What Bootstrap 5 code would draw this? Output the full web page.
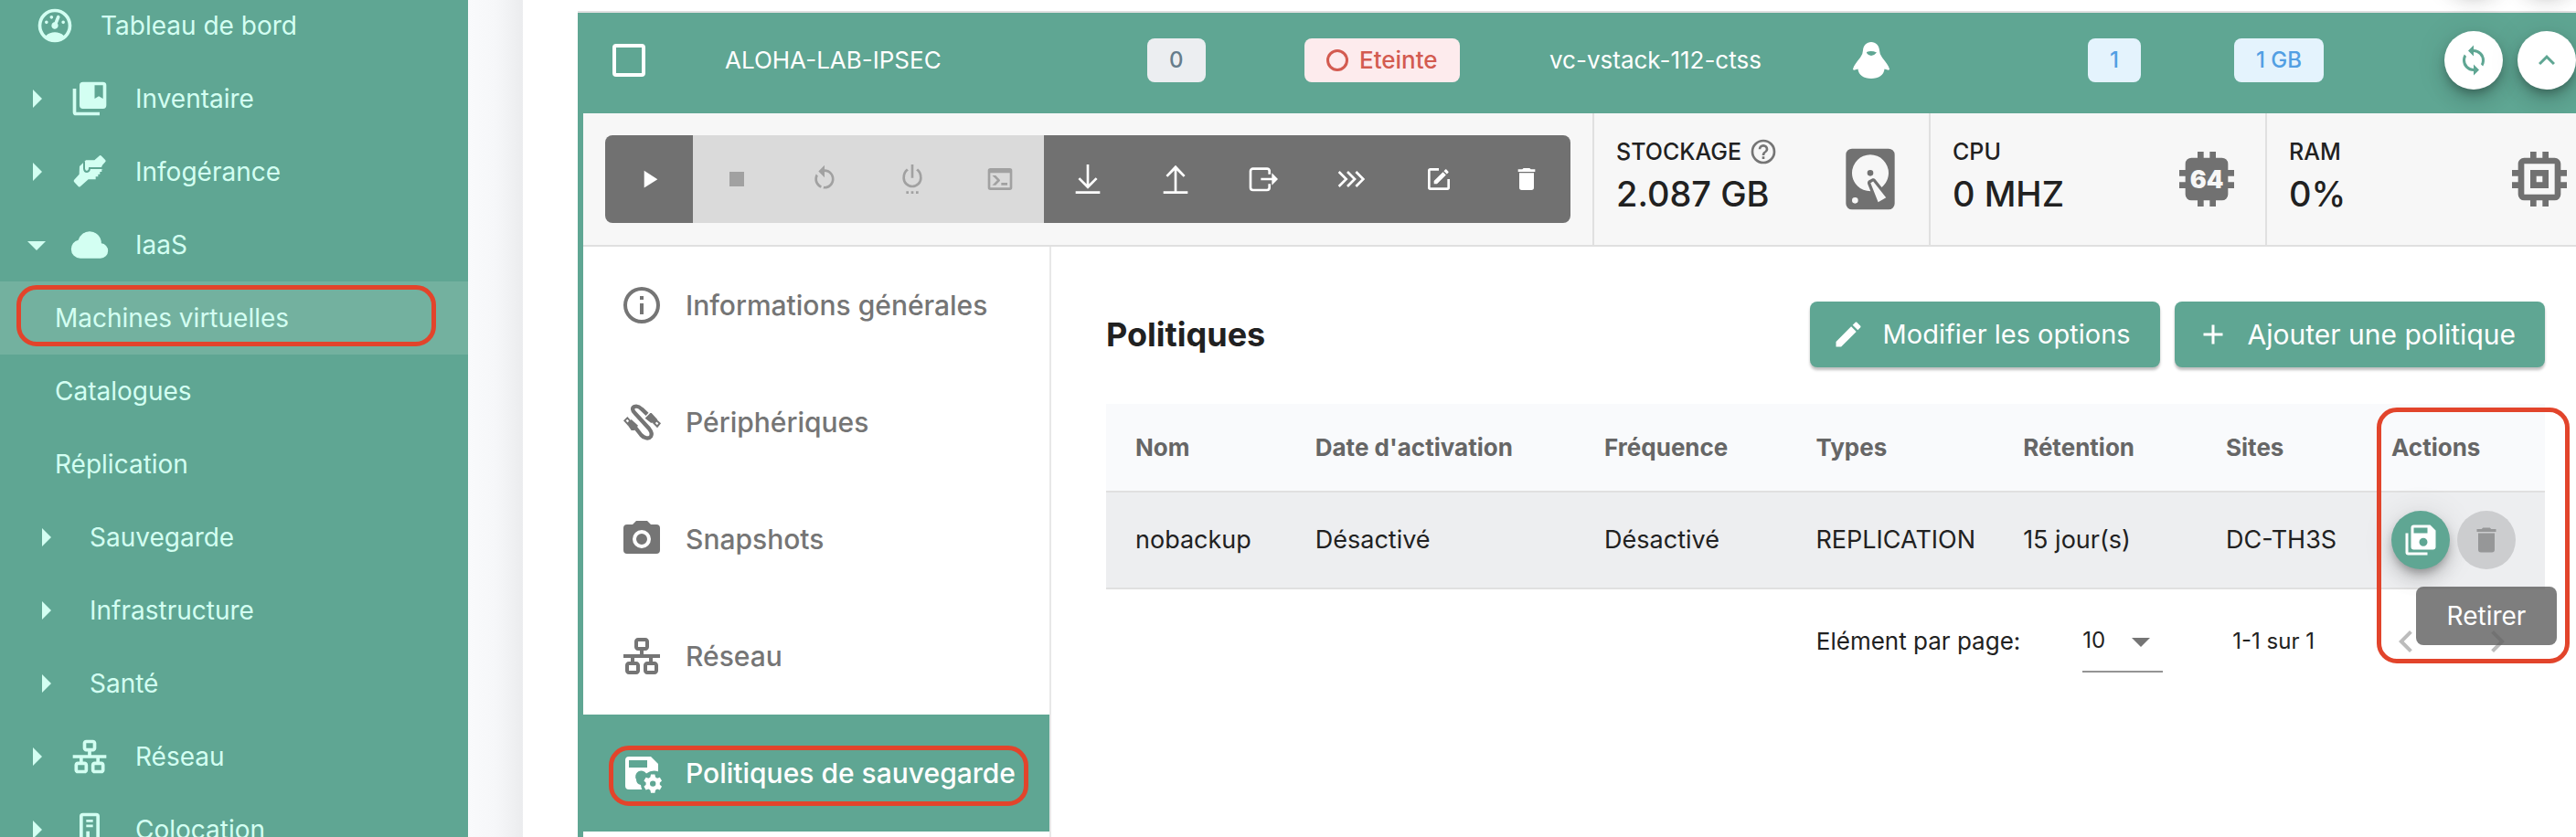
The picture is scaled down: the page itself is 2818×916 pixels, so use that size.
<!DOCTYPE html>
<html lang="fr">
<head>
<meta charset="utf-8">
<meta name="viewport" content="width=device-width, initial-scale=1">
<title>Machines virtuelles</title>
<link href="https://cdn.jsdelivr.net/npm/bootstrap@5.3.0/dist/css/bootstrap.min.css" rel="stylesheet">
<style>
:root{--brand:#5fa693;--mint:#d3fff2;--grey:#717171;--line:#e0e0e0;--alert:#e2442b;}
body{font-family:Inter,"Open Sans",sans-serif;font-size:26px;line-height:40px;color:#212121;background:#fff;}
svg{display:block;fill:currentColor;flex-shrink:0;}
.i32{width:32px;height:32px}.i36{width:36px;height:36px}.i44{width:44px;height:44px}.i48{width:48px;height:48px}.i80{width:80px;height:80px}
.shell{height:100vh;}
.side{width:512px;background:var(--brand);font-size:28px;}
.side ul{margin-top:-12px;}
.side a{height:80px;color:var(--mint);padding-left:16px;gap:12px;white-space:nowrap;}
.side a.top-link{padding-left:38px;gap:28px;}
.side .lbl{margin-left:16px;}
.side a.leaf{padding-left:60px;}
.side a.nested{padding-left:26px;}
.side .nested .lbl{margin-left:12px;}
.side a.current{background:#73b19f;}
.ring::after{content:"";position:absolute;border:5px solid var(--alert);border-radius:22px;pointer-events:none;}
.side .ring::after{left:18px;right:35px;top:4px;bottom:9px;}
.gutter{width:60px;background:linear-gradient(90deg,#f9fafc 0,#f6f7f9 50%,#ebecee 100%);}
.page-main{padding-left:60px;}
.prev-row{height:112px;margin-top:-98px;border-bottom:2px solid var(--line);}
.vm{border-left:6px solid var(--brand);min-height:100vh;}
.vm-head{background:var(--brand);color:#fff;height:110px;padding-bottom:6px;display:grid;grid-template-columns:155px 462fr 172fr 268fr 332fr 257fr 160fr 230fr 144px;align-items:center;}
.vm-check{appearance:none;width:36px;height:36px;border:4px solid #fff;border-radius:4px;background:none;margin-left:32px;display:block;}
.os-icon{margin-left:-4px;}
.chip{height:48px;padding:0 24px;border-radius:8px;font-size:24px;font-weight:500;display:inline-flex;align-items:center;gap:12px;vertical-align:middle;}
.chip-n{background:#eceef1;color:#667c8b;}
.chip-r{background:#fdebed;color:#d35b50;font-size:26px;}
.chip-b{background:#e4f3fd;color:#529fe3;}
.dot{width:24px;height:24px;border:3px solid;border-radius:50%;}
.fab{width:64px;height:64px;border:0;border-radius:50%;padding:0;display:flex;align-items:center;justify-content:center;background:#fff;color:var(--brand);box-shadow:0 6px 10px -2px rgba(0,0,0,.25),0 12px 20px rgba(0,0,0,.14),0 2px 36px rgba(0,0,0,.1);}
.fab-go{background:var(--brand);color:#fff;}
.fab-off{background:#cccdcf;color:#969798;box-shadow:none;}
.tools{background:#f7f7f7;border-bottom:2px solid var(--line);height:146px;}
.tool-group{margin:24px;border-radius:8px;overflow:hidden;}
.tool-group .btn{width:96px;height:96px;padding:0;border:0;border-radius:0;background:var(--grey);color:#fff;display:flex;align-items:center;justify-content:center;opacity:1;}
.tool-group .btn:disabled{background:#dadada;color:#a1a1a1;}
.stat{border-left:2px solid var(--line);padding:0 24px 0 24px;height:144px;flex:0 0 368px;color:var(--grey);}
.stat:last-child{flex:1 1 0;padding-right:0;}
.stat-name{color:#212121;font-weight:500;font-size:25px;line-height:36px;}
.stat-name svg{color:#757575;}
.stat-val{color:#212121;font-weight:500;font-size:38px;line-height:56px;padding-bottom:4px;}
.vm-nav{width:512px;border-right:2px solid #e8e8e8;}
.vm-nav a{height:128px;padding-left:40px;gap:24px;color:#757575;font-size:30px;font-weight:500;white-space:nowrap;}
.vm-nav a.on{background:var(--brand);color:#fff;}
.vm-nav .ring::after{left:28px;right:23px;top:34px;bottom:28px;}
.pane{padding:60px 34px 0 60px;}
.pane h2{font-size:36px;font-weight:700;line-height:72px;margin:0;}
.act{height:72px;border:0;border-radius:8px;background:var(--brand);color:#fff;font-size:29px;padding:0 32px 0 24px;gap:20px;box-shadow:0 3px 3px rgba(0,0,0,.25);}
.act-add{font-size:30px;}
.act:hover{background:var(--brand);color:#fff;}
.pol-wrap{padding-top:40px;}
.pol{table-layout:fixed;margin:0;}
.pol th,.pol td{padding:0 0 0 32px;vertical-align:middle;border-bottom:2px solid var(--line);white-space:nowrap;background:none;color:#212121;}
.pol th{height:96px;background:#f9fafc;color:#666;font-size:26px;font-weight:700;}
.pol td{height:106px;background:#edeef0;font-size:27px;}
.c1{width:12.5%}.c2{width:20.1%}.c3{width:14.7%}.c4{width:14.4%}.c5{width:14.1%}.c6{width:11.5%}.c7{width:12.7%}
.pol-wrap::after{right:-27px;width:211px;top:44px;height:280px;z-index:3;}
.tip{right:-13px;top:240px;width:154px;height:64px;border-radius:8px;background:rgba(97,97,97,.82);color:#fff;z-index:2;font-size:28px;}
.pager{height:114px;font-size:24px;padding-right:28px;}
.pager label{font-size:26px;margin-right:68px;}
.pager .size-box,.pager .range{margin-right:76px;}
.pager select{appearance:none;border:0;border-bottom:2px solid #949494;border-radius:0;background:none;width:88px;height:68px;padding:0;font-size:24px;color:#212121;display:block;}
.pager .caret{right:0;top:10px;color:#757575;pointer-events:none;}
.pager button{border:0;background:none;padding:0;color:#bcbcbc;}
.pager .prev{margin-right:52px;}
</style>
</head>
<body>
<div class="shell d-flex overflow-hidden">
  <nav class="side flex-shrink-0 overflow-hidden" aria-label="Menu principal">
    <ul class="list-unstyled mb-0">
      <li><a href="#" class="top-link d-flex align-items-center text-decoration-none"><svg class="i44" viewBox="0 0 24 24"><path d="M12,2A10,10 0 0,0 2,12A10,10 0 0,0 12,22A10,10 0 0,0 22,12A10,10 0 0,0 12,2M12,4A8,8 0 0,1 20,12C20,14.4 19,16.5 17.3,18C15.9,16.7 14,16 12,16C10,16 8.2,16.7 6.7,18C5,16.5 4,14.4 4,12A8,8 0 0,1 12,4M14,5.89C13.62,5.9 13.26,6.15 13.1,6.54L11.81,9.77L11.71,10C11,10.13 10.41,10.6 10.14,11.26C9.73,12.29 10.23,13.45 11.26,13.86C12.29,14.27 13.45,13.77 13.86,12.74C14.12,12.08 14,11.32 13.57,10.76L13.67,10.5L14.96,7.29L14.97,7.26C15.17,6.75 14.92,6.17 14.41,5.96C14.28,5.91 14.15,5.89 14,5.89M10,6A1,1 0 0,0 9,7A1,1 0 0,0 10,8A1,1 0 0,0 11,7A1,1 0 0,0 10,6M7,9A1,1 0 0,0 6,10A1,1 0 0,0 7,11A1,1 0 0,0 8,10A1,1 0 0,0 7,9M17,9A1,1 0 0,0 16,10A1,1 0 0,0 17,11A1,1 0 0,0 18,10A1,1 0 0,0 17,9Z"/></svg>Tableau de bord</a></li>
      <li><a href="#" class="d-flex align-items-center text-decoration-none"><svg class="i48" viewBox="0 0 24 24"><path d="M10,17L15,12L10,7V17Z"/></svg><svg class="i44" viewBox="0 0 24 24"><path d="M4,6H2V20A2,2 0 0,0 4,22H18V20H4V6M20,2H8A2,2 0 0,0 6,4V16A2,2 0 0,0 8,18H20A2,2 0 0,0 22,16V4A2,2 0 0,0 20,2M20,12L17.5,10.5L15,12V4H20V12Z"/></svg><span class="lbl">Inventaire</span></a></li>
      <li><a href="#" class="d-flex align-items-center text-decoration-none"><svg class="i48" viewBox="0 0 24 24"><path d="M10,17L15,12L10,7V17Z"/></svg><svg class="i44" viewBox="18 18 132 132"><path d="M51 66L72 46H100L117 31Q120 29 123 32L136 46Q138 49 136 51L126 62L123 69H128V76H124V84H118V92H112V100H104V109H80L53 133Q50 135 47 132L33 117Q31 114 33 111L50 92Z"/><path d="M66 50V74Q67 84 75 84Q84 83 84 72H130" fill="none" stroke="#5fa693" stroke-width="6"/></svg><span class="lbl">Infogérance</span></a></li>
      <li><a href="#" class="d-flex align-items-center text-decoration-none"><svg class="i48" viewBox="0 0 24 24"><path d="M7,10L12,15L17,10H7Z"/></svg><svg class="i44" viewBox="0 0 24 24"><path d="M6.5 20Q4.22 20 2.61 18.43 1 16.85 1 14.58 1 12.63 2.17 11.1 3.35 9.57 5.25 9.15 5.88 6.85 7.75 5.43 9.63 4 12 4 14.93 4 16.96 6.04 19 8.07 19 11 20.73 11.2 21.86 12.5 23 13.78 23 15.5 23 17.38 21.69 18.69 20.38 20 18.5 20Z"/></svg><span class="lbl">IaaS</span></a></li>
      <li><a href="#" class="leaf current ring position-relative d-flex align-items-center text-decoration-none" aria-current="page">Machines virtuelles</a></li>
      <li><a href="#" class="leaf d-flex align-items-center text-decoration-none">Catalogues</a></li>
      <li><a href="#" class="leaf d-flex align-items-center text-decoration-none">Réplication</a></li>
      <li><a href="#" class="nested d-flex align-items-center text-decoration-none"><svg class="i48" viewBox="0 0 24 24"><path d="M10,17L15,12L10,7V17Z"/></svg><span class="lbl">Sauvegarde</span></a></li>
      <li><a href="#" class="nested d-flex align-items-center text-decoration-none"><svg class="i48" viewBox="0 0 24 24"><path d="M10,17L15,12L10,7V17Z"/></svg><span class="lbl">Infrastructure</span></a></li>
      <li><a href="#" class="nested d-flex align-items-center text-decoration-none"><svg class="i48" viewBox="0 0 24 24"><path d="M10,17L15,12L10,7V17Z"/></svg><span class="lbl">Santé</span></a></li>
      <li><a href="#" class="d-flex align-items-center text-decoration-none"><svg class="i48" viewBox="0 0 24 24"><path d="M10,17L15,12L10,7V17Z"/></svg><svg class="i44" viewBox="0 0 24 24"><path d="M10,2C8.89,2 8,2.89 8,4V7C8,8.11 8.89,9 10,9H11V11H2V13H6V15H5C3.89,15 3,15.89 3,17V20C3,21.11 3.89,22 5,22H9C10.11,22 11,21.11 11,20V17C11,15.89 10.11,15 9,15H8V13H16V15H15C13.89,15 13,15.89 13,17V20C13,21.11 13.89,22 15,22H19C20.11,22 21,21.11 21,20V17C21,15.89 20.11,15 19,15H18V13H22V11H13V9H14C15.11,9 16,8.11 16,7V4C16,2.89 15.11,2 14,2H10M10,4H14V7H10V4M5,17H9V20H5V17M15,17H19V20H15V17Z"/></svg><span class="lbl">Réseau</span></a></li>
      <li><a href="#" class="d-flex align-items-center text-decoration-none"><svg class="i48" viewBox="0 0 24 24"><path d="M10,17L15,12L10,7V17Z"/></svg><svg class="i44" viewBox="0 0 24 24"><path d="M8,2H16A2,2 0 0 1 18,4V22H6V4A2,2 0 0 1 8,2M8,4V20H16V4H8M10,6H14V7.5H10V6M10,9H14V10.5H10V9M10,13H12V20H10V13Z"/></svg><span class="lbl">Colocation</span></a></li>
    </ul>
  </nav>
  <div class="gutter flex-shrink-0"></div>
  <main class="page-main flex-grow-1 overflow-hidden">
    <div class="prev-row d-flex justify-content-end align-items-center gap-3">
      <button class="fab" type="button" aria-label="Actualiser"></button>
      <button class="fab" type="button" aria-label="Déplier"></button>
    </div>
    <section class="vm d-flex flex-column">
      <header class="vm-head text-nowrap">
        <div><input class="vm-check" type="checkbox" aria-label="Sélectionner ALOHA-LAB-IPSEC"></div>
        <div>ALOHA-LAB-IPSEC</div>
        <div><span class="chip chip-n">0</span></div>
        <div><span class="chip chip-r"><span class="dot"></span>Eteinte</span></div>
        <div>vc-vstack-112-ctss</div>
        <div><svg class="os-icon i48" viewBox="0 0 48 48"><path fill-rule="evenodd" d="M24 4C19 4 15.500 7.500 15 13Q15 17 12 21C8 26 5.500 29 4 33.500Q4 35 6 34.500L9.500 33.500C10 40 16 44 24 44S38 40 38.500 33.500L42 34.500Q44 35 44 33.500C42.500 29 40 26 36 21Q33 17 33 13C32.500 7.500 29 4 24 4M19 15Q24 13 30 15.500Q27 19 24 19Q21 19 19 16Z"/></svg></div>
        <div><span class="chip chip-b">1</span></div>
        <div><span class="chip chip-b">1 GB</span></div>
        <div class="d-flex gap-3">
          <button class="fab" type="button" aria-label="Actualiser"><svg class="i36" viewBox="0 0 24 24"><path d="M12,18A6,6 0 0,1 6,12C6,11 6.25,10.03 6.7,9.2L5.24,7.74C4.46,8.97 4,10.43 4,12A8,8 0 0,0 12,20V23L16,19L12,15M12,4V1L8,5L12,9V6A6,6 0 0,1 18,12C18,13 17.75,13.97 17.3,14.8L18.76,16.26C19.54,15.03 20,13.57 20,12A8,8 0 0,0 12,4Z"/></svg></button>
          <button class="fab" type="button" aria-label="Replier"><svg class="i36" viewBox="0 0 24 24"><path d="M7.41,15.41L12,10.83L16.59,15.41L18,14L12,8L6,14L7.41,15.41Z"/></svg></button>
        </div>
      </header>
      <div class="tools d-flex">
        <div class="tool-group d-flex flex-shrink-0 align-self-start">
          <button class="btn" type="button" aria-label="Démarrer"><svg class="i32" viewBox="0 0 24 24"><path d="M8,5.14V19.14L19,12.14L8,5.14Z"/></svg></button>
          <button class="btn" type="button" aria-label="Arrêter" disabled><svg class="i32" viewBox="0 0 24 24"><path d="M18,18H6V6H18V18Z"/></svg></button>
          <button class="btn" type="button" aria-label="Redémarrer" disabled><svg class="i32" viewBox="0 0 24 24"><path d="M12,4C14.1,4 16.1,4.8 17.6,6.3C20.7,9.4 20.7,14.5 17.6,17.6C15.8,19.5 13.3,20.2 10.9,19.9L11.4,17.9C13.1,18.1 14.9,17.5 16.2,16.2C18.5,13.9 18.5,10.1 16.2,7.7C15.1,6.6 13.5,6 12,6V10.6L7,5.6L12,0.6V4M6.3,17.6C3.7,15 3.3,11 5.1,7.9L6.6,9.4C5.5,11.6 5.9,14.4 7.8,16.2C8.3,16.7 8.9,17.1 9.6,17.4L9,19.4C8,19 7.1,18.4 6.3,17.6Z"/></svg></button>
          <button class="btn" type="button" aria-label="Éteindre" disabled><svg class="i32" viewBox="0 0 24 24"><path d="M7,24H9V22H7V24M11,24H13V22H11V24M13,0H11V11H13V0M16.56,3.44L15.11,4.89C16.84,5.94 18,7.83 18,11A6,6 0 0,1 12,17A6,6 0 0,1 6,11C6,7.83 7.16,5.94 8.88,4.88L7.44,3.44C5.36,4.88 4,7.28 4,11A8,8 0 0,0 12,19A8,8 0 0,0 20,11C20,7.28 18.64,4.88 16.56,3.44M15,24H17V22H15V24Z"/></svg></button>
          <button class="btn" type="button" aria-label="Console" disabled><svg class="i32" viewBox="0 0 24 24"><path d="M20,19V7H4V19H20M20,3A2,2 0 0,1 22,5V19A2,2 0 0,1 20,21H4A2,2 0 0,1 2,19V5C2,3.890 2.900,3 4,3H20M13,17V15H18V17H13M9.580,13L5.570,9H8.400L11.700,12.300C12.090,12.690 12.090,13.330 11.700,13.720L8.420,17H5.590L9.580,13Z"/></svg></button>
          <button class="btn" type="button" aria-label="Télécharger"><svg class="i32" viewBox="0 0 24 24"><path d="M19.92,12.08L12,20L4.08,12.08L5.500,10.67L11,16.17V0H13V16.17L18.500,10.66L19.92,12.08M2,22H22V24H2V22Z"/></svg></button>
          <button class="btn" type="button" aria-label="Importer"><svg class="i32" viewBox="0 0 24 24"><path d="M4.080,8.920L12,0.500L19.920,8.920L18.500,10.330L13,4.800V22H22V24H2V22H11V4.800L5.500,10.330Z"/></svg></button>
          <button class="btn" type="button" aria-label="Exporter"><svg class="i32" viewBox="0 0 24 24"><path d="M17 8V5A2 2 0 0 0 15 3.500H3.500A2 2 0 0 0 1.500 5.500V19A2 2 0 0 0 3.500 21H15A2 2 0 0 0 17 19V16" fill="none" stroke="currentColor" stroke-width="2"/><path d="M10 11H19V7L24 12L19 17V13H10Z"/></svg></button>
          <button class="btn" type="button" aria-label="Migrer"><svg class="i32" viewBox="0 0 24 24"><path d="M2 6L8 12L2 18M9 6L15 12L9 18M16 6L22 12L16 18" fill="none" stroke="currentColor" stroke-width="2"/></svg></button>
          <button class="btn" type="button" aria-label="Modifier"><svg class="i32" viewBox="0 0 24 24"><path d="M5,3C3.890,3 3,3.890 3,5V19A2,2 0 0,0 5,21H19A2,2 0 0,0 21,19V12H19V19H5V5H12V3H5M17.780,4C17.610,4 17.430,4.070 17.300,4.200L16.080,5.410L18.580,7.910L19.800,6.700C20.060,6.440 20.060,6 19.800,5.750L18.250,4.200C18.120,4.070 17.950,4 17.780,4M15.370,6.120L8,13.500V16H10.500L17.870,8.620L15.370,6.120Z"/></svg></button>
          <button class="btn" type="button" aria-label="Supprimer"><svg class="i32" viewBox="0 0 24 24"><path d="M19,4H15.500L14.500,3H9.500L8.500,4H5V6H19M6,19A2,2 0 0,0 8,21H16A2,2 0 0,0 18,19V7H6V19Z"/></svg></button>
        </div>
        <div class="stat d-flex justify-content-between align-items-center">
          <div><div class="stat-name d-flex align-items-center gap-2">STOCKAGE <svg class="i32" viewBox="0 0 24 24"><path d="M11,18H13V16H11V18M12,2A10,10 0 0,0 2,12A10,10 0 0,0 12,22A10,10 0 0,0 22,12A10,10 0 0,0 12,2M12,20C7.590,20 4,16.410 4,12C4,7.590 7.590,4 12,4C16.410,4 20,7.590 20,12C20,16.410 16.410,20 12,20M12,6A4,4 0 0,0 8,10H10A2,2 0 0,1 12,8A2,2 0 0,1 14,10C14,12 11,11.750 11,15H13C13,12.750 16,12.500 16,10A4,4 0 0,0 12,6Z"/></svg></div><div class="stat-val">2.087 GB</div></div>
          <svg class="i80" viewBox="0 0 24 24"><path d="M6,2H18A2,2 0 0,1 20,4V20A2,2 0 0,1 18,22H6A2,2 0 0,1 4,20V4A2,2 0 0,1 6,2M12,4A6,6 0 0,0 6,10C6,13.310 8.690,16 12.100,16L11.220,13.770C10.950,13.290 11.110,12.680 11.590,12.400L12.450,11.900C12.930,11.630 13.540,11.790 13.820,12.270L15.740,14.690C17.120,13.590 18,11.900 18,10A6,6 0 0,0 12,4M12,9A1,1 0 0,1 13,10A1,1 0 0,1 12,11A1,1 0 0,1 11,10A1,1 0 0,1 12,9M7,18A1,1 0 0,0 6,19A1,1 0 0,0 7,20A1,1 0 0,0 8,19A1,1 0 0,0 7,18M12.090,13.270L14.580,19.580L17.170,18.080L12.950,12.770L12.090,13.270Z"/></svg>
        </div>
        <div class="stat d-flex justify-content-between align-items-center">
          <div><div class="stat-name">CPU</div><div class="stat-val">0 MHZ</div></div>
          <svg class="i80" viewBox="0 0 24 24"><path d="M9,3V5H7A2,2 0 0,0 5,7V9H3V11H5V13H3V15H5V17A2,2 0 0,0 7,19H9V21H11V19H13V21H15V19H17A2,2 0 0,0 19,17V15H21V13H19V11H21V9H19V7A2,2 0 0,0 17,5H15V3H13V5H11V3Z"/><text x="12" y="15" text-anchor="middle" font-family="Inter" font-weight="900" font-size="8" fill="#f7f7f7">64</text></svg>
        </div>
        <div class="stat d-flex justify-content-between align-items-center">
          <div><div class="stat-name">RAM</div><div class="stat-val">0%</div></div>
          <svg class="i80" viewBox="0 0 24 24"><path d="M17,17H7V7H17M21,11V9H19V7C19,5.890 18.100,5 17,5H15V3H13V5H11V3H9V5H7C5.890,5 5,5.890 5,7V9H3V11H5V13H3V15H5V17A2,2 0 0,0 7,19H9V21H11V19H13V21H15V19H17A2,2 0 0,0 19,17V15H21V13H19V11M13,13H11V11H13M15,9H9V15H15V9Z"/></svg>
        </div>
      </div>
      <div class="d-flex flex-grow-1">
        <nav class="vm-nav flex-shrink-0" aria-label="Machine virtuelle">
          <a href="#" class="d-flex align-items-center text-decoration-none"><svg class="i48" viewBox="0 0 24 24"><path d="M11,9H13V7H11M12,20C7.590,20 4,16.410 4,12C4,7.590 7.590,4 12,4C16.410,4 20,7.590 20,12C20,16.410 16.410,20 12,20M12,2A10,10 0 0,0 2,12A10,10 0 0,0 12,22A10,10 0 0,0 22,12A10,10 0 0,0 12,2M11,17H13V11H11V17Z"/></svg>Informations générales</a>
          <a href="#" class="d-flex align-items-center text-decoration-none"><svg class="i48" viewBox="18 24 144 144"><g fill="none" stroke="currentColor" stroke-width="13"><path d="M66 110L88 138C98 150 114 152 120 143C125 135 122 127 114 117L68 67C58 57 58 49 66 45C74 42 82 45 90 53L108 70"/><path d="M34 91L43 82L52 92L44 102Z" stroke-width="6"/><path d="M130 99L139 91L149 100L141 110Z" stroke-width="6"/></g><path d="M41 101L56 87L78 107L66 123H56ZM101 83L118 66H122L142 88L132 98H120Z"/></svg>Périphériques</a>
          <a href="#" class="d-flex align-items-center text-decoration-none"><svg class="i48" viewBox="0 0 24 24"><path d="M4,4H7L9,2H15L17,4H20A2,2 0 0,1 22,6V18A2,2 0 0,1 20,20H4A2,2 0 0,1 2,18V6A2,2 0 0,1 4,4M12,7A5,5 0 0,0 7,12A5,5 0 0,0 12,17A5,5 0 0,0 17,12A5,5 0 0,0 12,7M12,9A3,3 0 0,1 15,12A3,3 0 0,1 12,15A3,3 0 0,1 9,12A3,3 0 0,1 12,9Z"/></svg>Snapshots</a>
          <a href="#" class="d-flex align-items-center text-decoration-none"><svg class="i48" viewBox="0 0 24 24"><path d="M10,2C8.89,2 8,2.89 8,4V7C8,8.11 8.89,9 10,9H11V11H2V13H6V15H5C3.89,15 3,15.89 3,17V20C3,21.11 3.89,22 5,22H9C10.11,22 11,21.11 11,20V17C11,15.89 10.11,15 9,15H8V13H16V15H15C13.89,15 13,15.89 13,17V20C13,21.11 13.89,22 15,22H19C20.11,22 21,21.11 21,20V17C21,15.89 20.11,15 19,15H18V13H22V11H13V9H14C15.11,9 16,8.11 16,7V4C16,2.89 15.11,2 14,2H10M10,4H14V7H10V4M5,17H9V20H5V17M15,17H19V20H15V17Z"/></svg>Réseau</a>
          <a href="#" class="on ring position-relative d-flex align-items-center text-decoration-none" aria-current="page"><svg class="i48" viewBox="0 0 24 24"><path d="M5,3H17L21,7V11.100A7,7 0 0 0 14.500,12.300A3,3 0 0 0 9,15.500A3,3 0 0 0 11.500,18.500A7,7 0 0 0 12.200,21H5A2,2 0 0 1 3,19V5A2,2 0 0 1 5,3M5,5V9H15V5Z"/><path d="M17 12.800H19.200L19.500 14.300L20.500 14.900L21.900 14.400L23 16.200L21.900 17.200V18.400L23 19.400L21.900 21.300L20.500 20.800L19.500 21.400L19.200 22.900H17L16.700 21.400L15.700 20.800L14.300 21.300L13.200 19.400L14.300 18.400V17.200L13.200 16.200L14.300 14.400L15.700 14.900L16.700 14.300ZM18.100 16.200A1.600 1.600 0 1 0 18.100 19.400A1.600 1.600 0 1 0 18.100 16.200Z" fill-rule="evenodd"/></svg>Politiques de sauvegarde</a>
        </nav>
        <div class="pane flex-grow-1">
          <div class="d-flex justify-content-between align-items-center">
            <h2>Politiques</h2>
            <div class="d-flex gap-3">
              <button type="button" class="btn act d-flex align-items-center"><svg class="i36" viewBox="0 0 24 24"><path d="M20.710,7.040C21.100,6.650 21.100,6 20.710,5.630L18.370,3.290C18,2.900 17.350,2.900 16.960,3.290L15.120,5.120L18.870,8.870M3,17.250V21H6.750L17.810,9.930L14.060,6.180L3,17.250Z"/></svg>Modifier les options</button>
              <button type="button" class="btn act act-add d-flex align-items-center"><svg class="i36" viewBox="0 0 24 24"><path d="M19,13H13V19H11V13H5V11H11V5H13V11H19V13Z"/></svg>Ajouter une politique</button>
            </div>
          </div>
          <div class="pol-wrap ring position-relative">
            <table class="table pol">
              <colgroup><col class="c1"><col class="c2"><col class="c3"><col class="c4"><col class="c5"><col class="c6"><col class="c7"></colgroup>
              <thead><tr><th scope="col">Nom</th><th scope="col">Date d'activation</th><th scope="col">Fréquence</th><th scope="col">Types</th><th scope="col">Rétention</th><th scope="col">Sites</th><th scope="col">Actions</th></tr></thead>
              <tbody><tr><td>nobackup</td><td>Désactivé</td><td>Désactivé</td><td>REPLICATION</td><td>15 jour(s)</td><td>DC-TH3S</td>
                <td><div class="d-flex gap-2"><button class="fab fab-go" type="button" aria-label="Sauvegarder"><svg class="i36" viewBox="0 0 24 24"><path fill-rule="evenodd" d="M7,1H19L23,5V17A2,2 0 0 1 21,19H7A2,2 0 0 1 5,17V3A2,2 0 0 1 7,1M7,3V7H17V3ZM14,10.500A3,3 0 1 0 14,16.500A3,3 0 1 0 14,10.500ZM1,7H3V21H17V23H3A2,2 0 0 1 1,21Z"/></svg></button><button class="fab fab-off" type="button" aria-label="Retirer" aria-describedby="tip"><svg class="i36" viewBox="0 0 24 24"><path d="M19,4H15.500L14.500,3H9.500L8.500,4H5V6H19M6,19A2,2 0 0,0 8,21H16A2,2 0 0,0 18,19V7H6V19Z"/></svg></button></div></td></tr></tbody>
            </table>
            <div class="tip position-absolute d-flex align-items-center justify-content-center" id="tip" role="tooltip">Retirer</div>
            <div class="pager d-flex align-items-center justify-content-end">
              <label for="pp">Elément par page:</label>
              <div class="size-box position-relative"><select id="pp"><option>10</option></select><svg class="caret position-absolute i48" viewBox="0 0 24 24"><path d="M7,10L12,15L17,10H7Z"/></svg></div>
              <span class="range">1-1 sur 1</span>
              <button class="prev" type="button" aria-label="Page précédente"><svg class="i48" viewBox="0 0 24 24"><path d="M15.410,16.580L10.830,12L15.410,7.410L14,6L8,12L14,18L15.410,16.580Z"/></svg></button>
              <button type="button" aria-label="Page suivante"><svg class="i48" viewBox="0 0 24 24"><path d="M8.590,16.580L13.170,12L8.590,7.410L10,6L16,12L10,18L8.590,16.580Z"/></svg></button>
            </div>
          </div>
        </div>
      </div>
    </section>
  </main>
</div>
<script src="https://cdn.jsdelivr.net/npm/bootstrap@5.3.0/dist/js/bootstrap.bundle.min.js"></script>
</body>
</html>
